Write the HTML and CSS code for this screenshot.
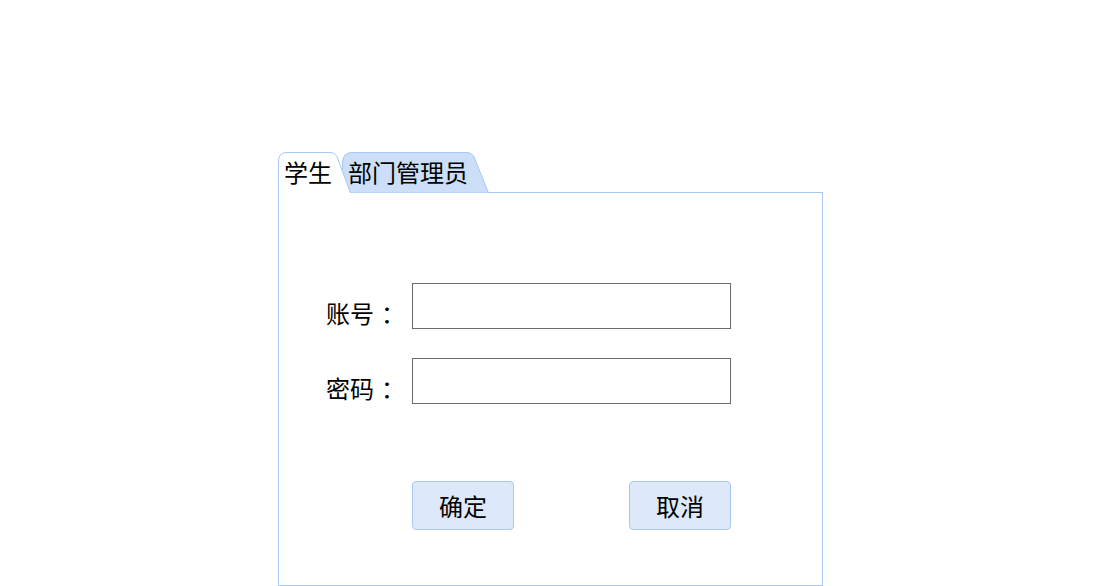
FILE: index.html
```html
<!DOCTYPE html>
<html lang="zh-CN">
<head>
    <meta charset="UTF-8">
    <title>登录</title>
    <link rel="stylesheet" href="styles.css">
</head>
<body>
    <div class="login">
        <div class="tabs">
            <div class="tab tab-active">
                <svg class="tab-shape" width="73" height="41" viewBox="0 0 73 41">
                    <path d="M0.5,41 V9 Q0.5,0.5 9,0.5 H52 Q57,0.5 59.5,6 L72.5,41 Z" fill="#ffffff" stroke="#a8c8f2" stroke-width="1"/>
                    <path d="M1,40.5 H72" stroke="#ffffff" stroke-width="1.2"/>
                </svg>
                <span class="tab-text">学生</span>
            </div>
            <div class="tab tab-other">
                <svg class="tab-shape" width="148" height="41" viewBox="0 0 148 41">
                    <path d="M1,41 L1.5,10 Q2,0.5 11,0.5 H126 Q131,0.5 133.5,6 L147.5,41 Z" fill="#cddff8" stroke="#a8c8f2" stroke-width="1"/>
                </svg>
                <span class="tab-text">部门管理员</span>
            </div>
        </div>
        <div class="panel">
            <div class="form-row">
                <label for="account">账号<span class="colon">：</span></label>
                <input type="text" id="account">
            </div>
            <div class="form-row">
                <label for="password">密码<span class="colon">：</span></label>
                <input type="password" id="password">
            </div>
            <div class="button-row">
                <button>确定</button>
                <button>取消</button>
            </div>
        </div>
    </div>
</body>
</html>
```

FILE: styles.css
```css
body {
    margin: 0;
    padding: 0;
    background: #fff;
    font-family: "Noto Sans CJK SC", "Noto Sans", sans-serif;
    color: #000;
}
.login {
    margin: 152px 0 0 278px;
    width: 545px;
}
.tabs {
    display: flex;
    height: 40px;
    position: relative;
    z-index: 1;
}
.tab {
    position: relative;
    height: 41px;
    font-size: 24px;
    line-height: 40px;
}
.tab-shape {
    position: absolute;
    left: 0;
    top: 0;
}
.tab-text {
    position: relative;
    padding-left: 6px;
}
.tab-active {
    width: 73px;
    z-index: 2;
}
.tab-other {
    width: 148px;
    margin-left: -10px;
    z-index: 1;
}
.tab-other .tab-text {
    padding-left: 7px;
}
.panel {
    border: 1px solid #a8c8f2;
    padding: 90px 0 0 47px;
    box-sizing: border-box;
    height: 394px;
}
.form-row {
    display: flex;
    align-items: flex-end;
    margin-bottom: 29px;
}
.form-row label {
    width: 86px;
    font-size: 24px;
    line-height: 24px;
    margin-bottom: 4px;
}
.colon {
    padding-left: 7px;
}
.form-row input {
    width: 319px;
    height: 46px;
    box-sizing: border-box;
    border: 1px solid #6b6b6b;
    margin: 0;
    padding: 0 6px;
    font-size: 20px;
    outline: none;
}
.button-row {
    display: flex;
    justify-content: space-between;
    width: 319px;
    margin: 77px 0 0 86px;
}
button {
    width: 102px;
    height: 49px;
    background: #dde9fb;
    border: 1px solid #a8c8f2;
    border-radius: 4px;
    font-family: "Noto Sans CJK SC", "Noto Sans", sans-serif;
    font-size: 24px;
    color: #000;
    padding: 0;
    cursor: pointer;
}
```
